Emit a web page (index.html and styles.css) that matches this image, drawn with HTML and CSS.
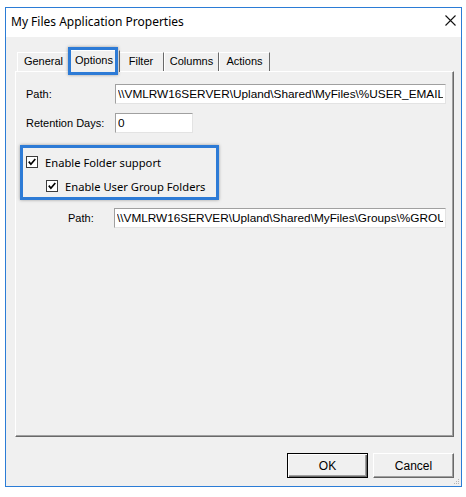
FILE: index.html
```html
<!DOCTYPE html>
<html lang="en">
<head>
    <meta charset="UTF-8">
    <title>My Files Application Properties</title>
    <link rel="stylesheet" href="styles.css">
</head>
<body>
    <div class="window">
        <div class="titlebar">
            <span class="title">My Files Application Properties</span>
            <svg class="close" width="11" height="11" viewBox="0 0 11 11">
                <path d="M0.5 0.5L10.5 10.5M10.5 0.5L0.5 10.5" stroke="#111" stroke-width="1.1" fill="none"/>
            </svg>
        </div>

        <div class="content">
            <!-- Tabs -->
            <div class="tabs">
                <div class="tab tab-general">General</div>
                <div class="tab tab-options active">Options</div>
                <div class="tab tab-filter">Filter</div>
                <div class="tab tab-columns">Columns</div>
                <div class="tab tab-actions">Actions</div>
            </div>

            <!-- Options page -->
            <div class="panel">
                <div class="row">
                    <label class="field-label" for="path">Path:</label>
                    <input class="field field-wide" type="text" id="path" value="\\VMLRW16SERVER\Upland\Shared\MyFiles\%USER_EMAIL%" readonly>
                </div>
                <div class="row row-gap">
                    <label class="field-label" for="retention">Retention Days:</label>
                    <input class="field field-short" type="text" id="retention" value="0" readonly>
                </div>

                <div class="highlight">
                    <div class="check-row">
                        <svg class="checkbox" width="12" height="12" viewBox="0 0 12 12">
                            <rect x="0.5" y="0.5" width="11" height="11" fill="#fff" stroke="#3c3c3c"/>
                            <path d="M2.8 5.6L4.9 8.2L9.3 3" fill="none" stroke="#000" stroke-width="1.7"/>
                        </svg>
                        <span>Enable Folder support</span>
                    </div>
                    <div class="check-row check-sub">
                        <svg class="checkbox" width="12" height="12" viewBox="0 0 12 12">
                            <rect x="0.5" y="0.5" width="11" height="11" fill="#fff" stroke="#3c3c3c"/>
                            <path d="M2.8 5.6L4.9 8.2L9.3 3" fill="none" stroke="#000" stroke-width="1.7"/>
                        </svg>
                        <span>Enable User Group Folders</span>
                    </div>
                </div>

                <div class="row row-sub">
                    <label class="field-label" for="groupPath">Path:</label>
                    <input class="field field-wide" type="text" id="groupPath" value="\\VMLRW16SERVER\Upland\Shared\MyFiles\Groups\%GROUP%" readonly>
                </div>
            </div>

            <div class="buttons">
                <button class="btn btn-default">OK</button>
                <button class="btn">Cancel</button>
            </div>
        </div>

        <svg class="grip" width="6" height="6" viewBox="0 0 6 6">
            <rect x="4" y="0" width="1" height="1" fill="#b5b5b5"/>
            <rect x="2" y="2" width="1" height="1" fill="#b5b5b5"/>
            <rect x="4" y="2" width="1" height="1" fill="#b5b5b5"/>
            <rect x="0" y="4" width="1" height="1" fill="#b5b5b5"/>
            <rect x="2" y="4" width="1" height="1" fill="#b5b5b5"/>
            <rect x="4" y="4" width="1" height="1" fill="#b5b5b5"/>
        </svg>
    </div>
</body>
</html>
```

FILE: styles.css
```css
body {
    margin: 0;
    background: #fff;
    font-family: "Liberation Sans", Arial, sans-serif;
    font-size: 11px;
    color: #000;
}

.window {
    box-sizing: border-box;
    width: 457px;
    height: 480px;
    margin: 7px 0 0 5px;
    border: 1px solid #2b7cd6;
    background: #f0f0f0;
    display: flex;
    flex-direction: column;
    position: relative;
}

.titlebar {
    height: 29px;
    background: #fff;
    display: flex;
    align-items: center;
    justify-content: space-between;
    padding: 0 5px;
}

.title {
    font-family: "Noto Sans", sans-serif;
    font-size: 12px;
    margin-top: -2px;
}

.close {
    margin-top: -5px;
}

.content {
    flex: 1;
    display: flex;
    flex-direction: column;
    padding: 12px 7px 8px 9px;
}

/* tabs */
.tabs {
    display: flex;
    align-items: flex-end;
    height: 22px;
    padding-left: 2px;
}

.tab {
    box-sizing: border-box;
    height: 19px;
    border: 1px solid;
    border-bottom: none;
    border-color: #fff #696969 transparent #fff;
    background: #f0f0f0;
    text-align: center;
    line-height: 17px;
}

.tab-general { width: 53px; }
.tab-options { width: 48px; }
.tab-filter { width: 46px; }
.tab-columns { width: 55px; }
.tab-actions { width: 51px; }

.tab.active {
    width: 52px;
    height: 22px;
    margin: 0 -2px -1px;
    line-height: 19px;
    position: relative;
    z-index: 1;
}

.tab.active::after {
    content: "";
    position: absolute;
    left: -1px;
    top: -4px;
    width: 50px;
    height: 28px;
    box-sizing: border-box;
    border: 3px solid #2d7bd6;
    box-shadow: 0 0 3px rgba(0, 0, 0, 0.35);
}

/* page */
.panel {
    flex: 1;
    box-sizing: border-box;
    border: 1px solid;
    border-color: #fff #696969 #696969 #fff;
    box-shadow: inset -1px -1px 0 #a0a0a0;
    padding: 12px 7px 0 10px;
}

.row {
    display: flex;
    align-items: center;
}

.row-gap {
    margin-top: 9px;
}

.field-label {
    width: 89px;
    flex: none;
}

.row-sub {
    margin-top: 8px;
}

.row-sub .field-label {
    box-sizing: border-box;
    width: 88px;
    padding-left: 42px;
}

.field {
    box-sizing: border-box;
    height: 20px;
    border: 1px solid;
    border-color: #a0a0a0 #e3e3e3 #e3e3e3 #a0a0a0;
    background: #fff;
    padding: 0 2px;
    font-family: "Liberation Sans", Arial, sans-serif;
    font-size: 11.8px;
    color: #000;
    outline: none;
}

.field-wide {
    flex: 1;
    min-width: 0;
}

.field-short {
    width: 78px;
}

.highlight {
    box-sizing: border-box;
    width: 199px;
    height: 55px;
    margin: 12px 0 0 -6px;
    border: 3px solid #2d7bd6;
    box-shadow: 0 0 3px rgba(0, 0, 0, 0.35);
    padding: 4px 0 0 3px;
    display: flex;
    flex-direction: column;
    gap: 4px;
}

.check-row {
    display: flex;
    align-items: center;
    gap: 7px;
    height: 20px;
    font-family: "Noto Sans", sans-serif;
    font-size: 11.2px;
}

.check-sub {
    padding-left: 20px;
}

.checkbox {
    flex: none;
}

/* dialog buttons */
.buttons {
    display: flex;
    justify-content: flex-end;
    gap: 5px;
    margin-top: 16px;
}

.btn {
    box-sizing: border-box;
    width: 81px;
    height: 25px;
    padding: 0;
    background: #f0f0f0;
    border: 1px solid;
    border-color: #fff #696969 #696969 #fff;
    box-shadow: inset -1px -1px 0 #a0a0a0;
    font-family: "Liberation Sans", Arial, sans-serif;
    font-size: 12px;
    color: #000;
}

.btn-default {
    border-color: #000;
    box-shadow: inset 1px 1px 0 #fff, inset -1px -1px 0 #696969, inset -2px -2px 0 #a0a0a0;
}

.grip {
    position: absolute;
    right: 1px;
    bottom: 1px;
}
```
